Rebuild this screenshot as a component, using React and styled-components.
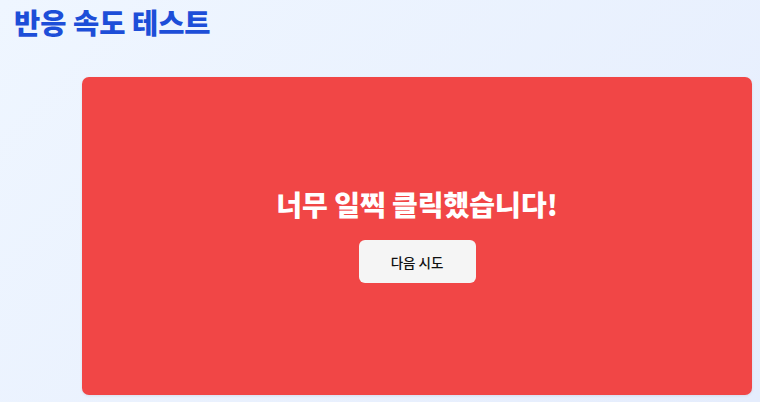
import React from "react";
import styled, { createGlobalStyle } from "styled-components";

const Global = createGlobalStyle`
  html, body { margin: 0; padding: 0; }
  body {
    font-family: "Noto Sans CJK KR", "Noto Sans", sans-serif;
    background: linear-gradient(135deg, #eff6ff 0%, #e5edfd 100%);
    min-height: 402px;
    overflow: hidden;
  }
`;

const Page = styled.div`
  display: flex;
  flex-direction: column;
  height: 402px;
  padding: 0 8px 7px 14px;
  box-sizing: border-box;
`;

const Title = styled.h1`
  margin: 4px 0 0 0;
  font-size: 28.5px;
  line-height: 36px;
  font-weight: 800;
  color: #1d4ed8;
`;

const Panel = styled.div`
  margin: 37px 0 0 68px;
  padding-bottom: 4px;
  flex: 1;
  background: #f14646;
  border-radius: 7px;
  display: flex;
  flex-direction: column;
  align-items: center;
  justify-content: center;
  gap: 17px;
  box-shadow: 0 1px 3px rgba(0, 0, 0, 0.08);
`;

const Message = styled.h2`
  margin: 0;
  font-size: 28px;
  line-height: 38px;
  font-weight: 800;
  color: #ffffff;
`;

const Button = styled.button`
  width: 117px;
  height: 43px;
  border: none;
  border-radius: 6px;
  background: #f5f5f5;
  color: #111111;
  font-family: inherit;
  font-size: 13.5px;
  font-weight: 500;
  cursor: pointer;
`;

export default function App() {
  return (
    <>
      <Global />
      <Page>
        <Title>반응 속도 테스트</Title>
        <Panel>
          <Message>너무 일찍 클릭했습니다!</Message>
          <Button>다음 시도</Button>
        </Panel>
      </Page>
    </>
  );
}
